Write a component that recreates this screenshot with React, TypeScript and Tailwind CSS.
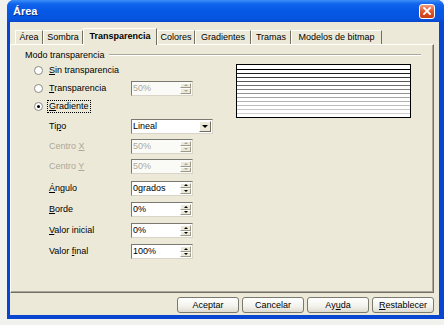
import React from "react";

const tabs = [
  { label: "Área", w: "w-[28px]" },
  { label: "Sombra", w: "w-[40px]" },
  { label: "Transparencia", w: "w-[74px]", active: true },
  { label: "Colores", w: "w-[38px]" },
  { label: "Gradientes", w: "w-[56px]" },
  { label: "Tramas", w: "w-[40px]" },
  { label: "Modelos de bitmap", w: "w-[91px]" },
];

function Radio({ checked }: { checked?: boolean }) {
  return (
    <span className="w-[9px] h-[9px] rounded-full border border-[#8a8a84] bg-white flex items-center justify-center shrink-0">
      {checked && <span className="w-[3px] h-[3px] rounded-full bg-black" />}
    </span>
  );
}

function SpinArrows({ disabled }: { disabled?: boolean }) {
  const arrow = disabled ? "border-b-[#aca899]" : "border-b-black";
  const arrowDown = disabled ? "border-t-[#aca899]" : "border-t-black";
  return (
    <div className="w-[12px] flex flex-col py-[1px] pr-[1px]">
      <div className="flex-1 flex items-center justify-center bg-[#ece9d8] border border-t-white border-l-white border-b-[#9d9a8c] border-r-[#9d9a8c]">
        <span className={`w-0 h-0 border-x-[2px] border-x-transparent border-b-[2px] ${arrow}`} />
      </div>
      <div className="flex-1 flex items-center justify-center bg-[#ece9d8] border border-t-white border-l-white border-b-[#9d9a8c] border-r-[#9d9a8c]">
        <span className={`w-0 h-0 border-x-[2px] border-x-transparent border-t-[2px] ${arrowDown}`} />
      </div>
    </div>
  );
}

function SpinField({ value, disabled }: { value: string; disabled?: boolean }) {
  return (
    <div
      className={`flex h-[15px] w-[62px] border border-t-[#7a7a72] border-l-[#7a7a72] border-b-[#d8d5c8] border-r-[#d8d5c8] ${
        disabled ? "bg-[#fafaf7]" : "bg-white"
      }`}
    >
      <div className={`flex-1 pl-[1px] leading-[13px] ${disabled ? "text-[#aca899]" : "text-black"}`}>{value}</div>
      <SpinArrows disabled={disabled} />
    </div>
  );
}

function Dropdown({ value }: { value: string }) {
  return (
    <div className="flex h-[15px] w-[82px] border border-t-[#7a7a72] border-l-[#7a7a72] border-b-[#d8d5c8] border-r-[#d8d5c8] bg-white">
      <div className="flex-1 pl-[1px] leading-[13px]">{value}</div>
      <div className="w-[12px] my-[1px] mr-[1px] flex items-center justify-center bg-[#ece9d8] border border-t-white border-l-white border-b-[#716f64] border-r-[#716f64]">
        <span className="w-0 h-0 border-x-[3px] border-x-transparent border-t-[3px] border-t-black" />
      </div>
    </div>
  );
}

function FieldRow({ h, label, children }: { h: string; label: React.ReactNode; children: React.ReactNode }) {
  return (
    <div className={`flex items-center pl-[38px] ${h}`}>
      <div className="w-[82px]">{label}</div>
      {children}
    </div>
  );
}

function Preview() {
  const colors = ["#000000", "#1e1e1e", "#3c3c3c", "#5a5a5a", "#6e6e6e", "#828282", "#949494", "#a4a4a4", "#b2b2b2", "#bdbdbd", "#c6c6c6", "#cfcfcf"];
  return (
    <svg width="175" height="54" viewBox="0 0 175 54" className="mt-[3px]">
      <rect x="0.5" y="0.5" width="174" height="53" fill="#ffffff" stroke="#000000" />
      {colors.map((c, i) => (
        <line key={i} x1="1" x2="174" y1={5.5 + i * 4} y2={5.5 + i * 4} stroke={c} strokeWidth="1" />
      ))}
    </svg>
  );
}

function Button({ children }: { children: React.ReactNode }) {
  return (
    <div className="w-[62px] h-[16px] flex items-center justify-center rounded-[3px] border border-[#7b7a70] bg-[linear-gradient(to_bottom,#ffffff,#f3f2ec_60%,#dedbcf)] text-black">
      {children}
    </div>
  );
}

export default function App() {
  return (
    <div className="w-[444px] h-[325px] overflow-hidden bg-[#f1f1ee] pl-[7px] font-['Liberation_Sans',Arial,sans-serif] text-[9px] leading-none text-black">
      <div className="w-[437px] h-[319px] flex flex-col rounded-t-[7px] overflow-hidden bg-[#0846d2]">
        {/* title bar */}
        <div className="h-[22px] flex items-center pl-[6px] pr-[9px] bg-[linear-gradient(to_bottom,#3d8ff8_0%,#1064ec_18%,#0558e6_50%,#0654df_85%,#0847cc_100%)]">
          <span className="text-white font-bold text-[11px] [text-shadow:1px_1px_0_#0a2a8a]">Área</span>
          <div className="ml-auto w-[16px] h-[15px] rounded-[3px] border border-white bg-[linear-gradient(to_bottom,#f09a7c,#e0562c_50%,#c93c14)] flex items-center justify-center">
            <svg width="8" height="8" viewBox="0 0 8 8">
              <path d="M1 1 L7 7 M7 1 L1 7" stroke="#ffffff" strokeWidth="1.8" strokeLinecap="square" />
            </svg>
          </div>
        </div>

        {/* body */}
        <div className="flex-1 ml-[3px] mr-[5px] mb-[4px] bg-[#ece9d8] flex flex-col pt-[6px] pb-[2px]">
          {/* tabs */}
          <div className="flex h-[16px] ml-[5px] items-end">
            {tabs.map((t) =>
              t.active ? (
                <div
                  key={t.label}
                  className={`${t.w} h-[17px] -mb-[1px] relative z-10 flex items-center justify-center pb-[2px] font-bold bg-[#ece9d8] border-t border-l border-t-white border-l-white border-r border-r-[#716f64]`}
                >
                  {t.label}
                </div>
              ) : (
                <div
                  key={t.label}
                  className={`${t.w} h-[14px] flex items-center justify-center bg-[#ece9d8] border-t border-t-white border-l border-l-white border-r border-r-[#716f64]`}
                >
                  {t.label}
                </div>
              )
            )}
          </div>

          {/* panel */}
          <div className="h-[249px] mr-[5px] border border-t-white border-l-white border-r-[#716f64] border-b-[#716f64] shadow-[inset_-1px_-1px_0_#aca899] pt-[4px]">
            <div className="h-[12px] flex items-center pl-[14px] pr-[12px]">
              <span>Modo transparencia</span>
              <div className="flex-1 ml-[4px] border-t border-t-[#aca899] border-b border-b-white" />
            </div>
            <div className="flex">
              <div className="w-[225px] flex flex-col">
                <div className="h-[18px] flex items-center pl-[23px] gap-[6px]">
                  <Radio />
                  <span>
                    <span className="underline">S</span>in transparencia
                  </span>
                </div>
                <div className="h-[18px] flex items-center pl-[23px]">
                  <Radio />
                  <span className="w-[88px] pl-[6px]">
                    <span className="underline">T</span>ransparencia
                  </span>
                  <SpinField value="50%" disabled />
                </div>
                <div className="h-[19px] flex items-center pl-[23px] gap-[5px]">
                  <Radio checked />
                  <span className="outline-dotted outline-1 outline-black px-[1px] py-[1px]">
                    <span className="underline">G</span>radiente
                  </span>
                </div>
                <FieldRow
                  h="h-[20px]"
                  label={
                    <span>
                      Ti<span className="underline">p</span>o
                    </span>
                  }
                >
                  <Dropdown value="Lineal" />
                </FieldRow>
                <FieldRow
                  h="h-[20px]"
                  label={
                    <span className="text-[#aca899]">
                      Centro <span className="underline">X</span>
                    </span>
                  }
                >
                  <SpinField value="50%" disabled />
                </FieldRow>
                <FieldRow
                  h="h-[21px]"
                  label={
                    <span className="text-[#aca899]">
                      Centro <span className="underline">Y</span>
                    </span>
                  }
                >
                  <SpinField value="50%" disabled />
                </FieldRow>
                <FieldRow
                  h="h-[22px]"
                  label={
                    <span>
                      <span className="underline">Á</span>ngulo
                    </span>
                  }
                >
                  <SpinField value="0grados" />
                </FieldRow>
                <FieldRow
                  h="h-[21px]"
                  label={
                    <span>
                      <span className="underline">B</span>orde
                    </span>
                  }
                >
                  <SpinField value="0%" />
                </FieldRow>
                <FieldRow
                  h="h-[21px]"
                  label={
                    <span>
                      <span className="underline">V</span>alor inicial
                    </span>
                  }
                >
                  <SpinField value="0%" />
                </FieldRow>
                <FieldRow
                  h="h-[21px]"
                  label={
                    <span>
                      Valor <span className="underline">f</span>inal
                    </span>
                  }
                >
                  <SpinField value="100%" />
                </FieldRow>
              </div>
              <Preview />
            </div>
          </div>

          {/* buttons */}
          <div className="flex justify-end gap-[3px] pr-[5px] pt-[4px]">
            <Button>Aceptar</Button>
            <Button>Cancelar</Button>
            <Button>
              Ay<span className="underline">u</span>da
            </Button>
            <Button>
              <span className="underline">R</span>establecer
            </Button>
          </div>
        </div>
      </div>
    </div>
  );
}
